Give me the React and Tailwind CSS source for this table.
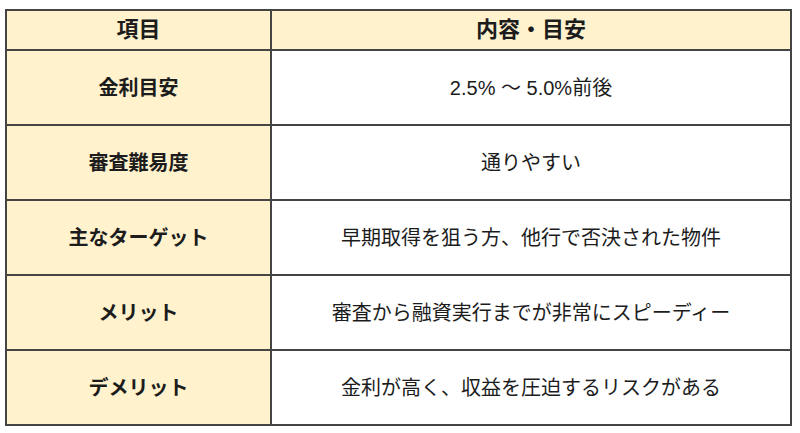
const rows = [
  ["金利目安", "2.5% 〜 5.0%前後"],
  ["審査難易度", "通りやすい"],
  ["主なターゲット", "早期取得を狙う方、他行で否決された物件"],
  ["メリット", "審査から融資実行までが非常にスピーディー"],
  ["デメリット", "金利が高く、収益を圧迫するリスクがある"],
];

export default function App() {
  return (
    <div
      className="w-[800px] h-[433px] bg-white pl-[5px] pt-[9px] text-[#1c1c1c]"
      style={{ fontFamily: '"Liberation Sans", "Noto Sans CJK JP", sans-serif' }}
    >
      <table className="w-[787px] border-collapse text-[20px] leading-none">
        <thead>
          <tr className="h-[40px] bg-[#fff2cc] text-[22px] font-bold">
            <th className="w-[265px] border-2 border-[#444] text-center">項目</th>
            <th className="border-2 border-[#444] text-center">内容・目安</th>
          </tr>
        </thead>
        <tbody>
          {rows.map(([label, value]) => (
            <tr key={label} className="h-[75px]">
              <td className="border-2 border-[#444] bg-[#fff2cc] text-center font-bold">
                {label}
              </td>
              <td className="border-2 border-[#444] text-center">{value}</td>
            </tr>
          ))}
        </tbody>
      </table>
    </div>
  );
}
